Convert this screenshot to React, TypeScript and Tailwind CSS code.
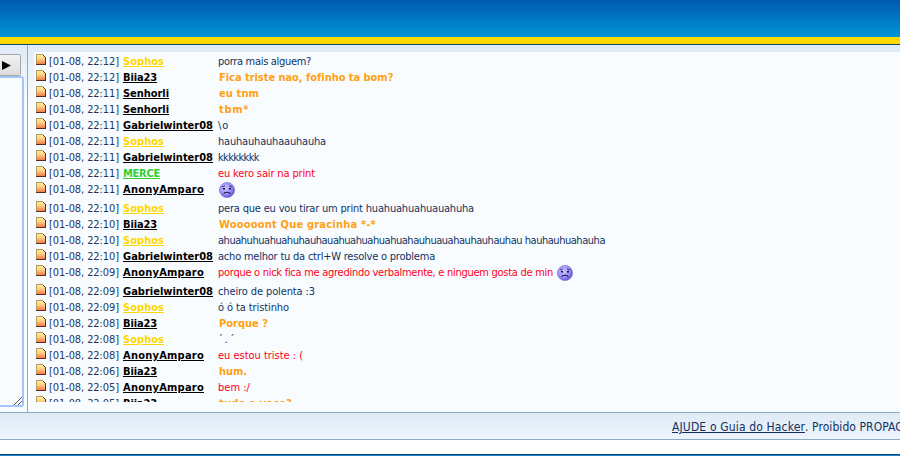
import { useLayoutEffect, useRef, useState } from 'react';

type Tone = 'navy' | 'orange' | 'red';
type Message = { time: string; user: string; text: string; width: number; tone: Tone; sad?: boolean };

const users: Record<string, { width: number; color: string }> = {
  Sophos: { width: 41, color: 'text-[#ffd700]' },
  Biia23: { width: 34, color: 'text-black' },
  Senhorli: { width: 46, color: 'text-black' },
  Gabrielwinter08: { width: 90, color: 'text-black' },
  MERCE: { width: 37, color: 'text-[#32cd32]' },
  AnonyAmparo: { width: 81, color: 'text-black' },
};

const tones: Record<Tone, string> = {
  navy: '-ml-px text-[#12325f]',
  orange: 'font-bold text-[#ffa012]',
  red: '-ml-px text-[#ff0019]',
};

const messages: Message[] = [
  { time: '22:12', user: 'Sophos', text: 'porra mais alguem?', width: 93, tone: 'navy' },
  { time: '22:12', user: 'Biia23', text: 'Fica triste nao, fofinho ta bom?', width: 174, tone: 'orange' },
  { time: '22:11', user: 'Senhorli', text: 'eu tnm', width: 40, tone: 'orange' },
  { time: '22:11', user: 'Senhorli', text: 'tbm*', width: 30, tone: 'orange' },
  { time: '22:11', user: 'Gabrielwinter08', text: '\\o', width: 11, tone: 'navy' },
  { time: '22:11', user: 'Sophos', text: 'hauhauhauhaauhauha', width: 108, tone: 'navy' },
  { time: '22:11', user: 'Gabrielwinter08', text: 'kkkkkkkk', width: 41, tone: 'navy' },
  { time: '22:11', user: 'MERCE', text: 'eu kero sair na print', width: 97, tone: 'red' },
  { time: '22:11', user: 'AnonyAmparo', text: '', width: 0, tone: 'red', sad: true },
  { time: '22:10', user: 'Sophos', text: 'pera que eu vou tirar um print huahuahuahuauahuha', width: 256, tone: 'navy' },
  { time: '22:10', user: 'Biia23', text: 'Wooooont Que gracinha *-*', width: 157, tone: 'orange' },
  { time: '22:10', user: 'Sophos', text: 'ahuahuhuahuahuhauhauahuahuahuahuahauhuauahauhauhauhau hauhauhuahauha', width: 387, tone: 'navy' },
  { time: '22:10', user: 'Gabrielwinter08', text: 'acho melhor tu da ctrl+W resolve o problema', width: 217, tone: 'navy' },
  { time: '22:09', user: 'AnonyAmparo', text: 'porque o nick fica me agredindo verbalmente, e ninguem gosta de min', width: 335, tone: 'red', sad: true },
  { time: '22:09', user: 'Gabrielwinter08', text: 'cheiro de polenta :3', width: 97, tone: 'navy' },
  { time: '22:09', user: 'Sophos', text: 'ó ó ta tristinho', width: 71, tone: 'navy' },
  { time: '22:08', user: 'Biia23', text: 'Porque ?', width: 49, tone: 'orange' },
  { time: '22:08', user: 'Sophos', text: '´.´', width: 18, tone: 'navy' },
  { time: '22:08', user: 'AnonyAmparo', text: 'eu estou triste : (', width: 85, tone: 'red' },
  { time: '22:06', user: 'Biia23', text: 'hum.', width: 28, tone: 'orange' },
  { time: '22:05', user: 'AnonyAmparo', text: 'bem :/', width: 32, tone: 'red' },
  { time: '22:05', user: 'Biia23', text: 'tudo e voce?', width: 73, tone: 'orange' },
];

/** Tracks a run of text so that it fills the given width. */
function Fit({ text, width, className = '' }: { text: string; width: number; className?: string }) {
  const ref = useRef<HTMLSpanElement>(null);
  const [spacing, setSpacing] = useState(0);
  useLayoutEffect(() => {
    if (ref.current && text.length) {
      ref.current.style.letterSpacing = '0px';
      const next = (width - ref.current.getBoundingClientRect().width) / text.length;
      ref.current.style.letterSpacing = `${next}px`;
      setSpacing(next);
    }
  }, [text, width]);
  return (
    <span ref={ref} className={`inline-block whitespace-pre ${className}`} style={{ letterSpacing: `${spacing}px` }}>
      {text}
    </span>
  );
}

function PostIcon() {
  return (
    <svg className="block h-[11px] w-[11px] shrink-0" viewBox="0 0 11 11" shapeRendering="crispEdges">
      <defs>
        <linearGradient id="note" x1="0" y1="0" x2="0" y2="1">
          <stop offset="0" stopColor="#fff6a4" />
          <stop offset="0.45" stopColor="#ffd083" />
          <stop offset="1" stopColor="#f4673f" />
        </linearGradient>
      </defs>
      <path d="M0 0H7V1H8V2H9V3H10V11H0Z" fill="url(#note)" />
      <path d="M0 0H7V1H1V10H0Z" fill="#b59a5c" />
      <path d="M7 1H8V2H9V3H10V11H0V10H9V3H8V2H7Z" fill="#59301f" />
    </svg>
  );
}

function SadFace() {
  return (
    <svg className="block h-4 w-4 shrink-0" viewBox="0 0 16 16">
      <defs>
        <radialGradient id="face" cx=".4" cy=".38" r=".65">
          <stop offset="0" stopColor="#c9c5ff" />
          <stop offset=".6" stopColor="#9a90fb" />
          <stop offset="1" stopColor="#6051cd" />
        </radialGradient>
      </defs>
      <circle cx="8" cy="8" r="7.6" fill="url(#face)" stroke="#7468c4" strokeWidth=".6" />
      <path d="M3 5L6 3.8M10 3.8L13 5" stroke="#30265c" strokeWidth=".9" />
      <path d="M4 6H6V7.5H4ZM10 6H12V7.5H10Z" fill="#17112d" />
      <path d="M5 12V11L6.5 10.4H9.5L11 11V12" fill="none" stroke="#17112d" strokeWidth="1" />
    </svg>
  );
}

function Row({ message }: { message: Message }) {
  const user = users[message.user];
  return (
    <li className={`flex shrink-0 items-start ${message.sad ? 'h-[19px]' : 'h-4'}`}>
      <PostIcon />
      <div className="ml-0.5 w-[74px] shrink-0 text-[#263761]">
        <Fit text={`[01-08, ${message.time}]`} width={70} />
      </div>
      <div className={`w-24 shrink-0 font-bold ${user.color}`}>
        <Fit text={message.user} width={user.width} className="underline decoration-1 underline-offset-1" />
      </div>
      <div className={`flex ${message.text ? tones[message.tone] : ''}`}>
        {message.text && <Fit text={message.text} width={message.width} />}
        {message.sad && <span className={message.text ? 'ml-1' : ''}><SadFace /></span>}
      </div>
    </li>
  );
}

export default function App() {
  return (
    <div className="flex h-[456px] w-[900px] flex-col overflow-hidden bg-white font-['DejaVu_Sans_Condensed','DejaVu_Sans',sans-serif] [font-stretch:condensed]">
      <header className="h-[37px] shrink-0 bg-linear-to-b from-[#005aae] to-[#0095d8]" />
      <div className="h-[7px] shrink-0 bg-[#ffd800]" />
      <div className="h-px shrink-0 bg-[#104a78]" />
      <main className="flex h-[367px] shrink-0 bg-[linear-gradient(to_bottom,#dfebf6_0px,#f8fcff_60px)]">
        <aside className="flex w-7 shrink-0 flex-col border-r border-[#8eabc4] pt-[9px]">
          <button className="flex h-[22px] w-[21px] items-center rounded-r-[2px] border border-l-0 border-[#a5a5a5] bg-linear-to-b from-[#f3f3f3] to-[#dddddd]">
            <svg className="ml-0.5 block h-[9px] w-[9px]" viewBox="0 0 9 9"><path d="M0 0L9 4.5L0 9Z" fill="#000" /></svg>
          </button>
          <div className="flex h-[331px] w-6 items-end justify-end rounded-r-[3px] border-2 border-l-0 border-[#a3c5fc] bg-[#f8fcff]">
            <svg className="block h-2 w-2" viewBox="0 0 8 8"><path d="M0 8L8 0M4 8L8 4" stroke="#555" fill="none" /></svg>
          </div>
        </aside>
        <ul className="ml-1.5 mt-[7px] flex h-[350px] flex-1 flex-col overflow-hidden bg-[#f8fcff] pl-0.5 pt-0.5 text-[11px] leading-4">
          {messages.map((message, index) => <Row key={index} message={message} />)}
        </ul>
      </main>
      <footer className="flex h-7 shrink-0 whitespace-nowrap border-y border-[#8eabc4] bg-linear-to-b from-[#dfebf6] to-[#eef4fd] pl-[672px] text-[12px] leading-[29px] text-[#12305e]">
        <Fit text="AJUDE o Guia do Hacker" width={133} className="underline decoration-1 underline-offset-1" />
        <Fit text=". Proibido PROPAGANDA" width={130} />
      </footer>
      <div className="mt-3.5 h-px shrink-0 bg-[#104a78]" />
      <div className="h-px shrink-0 bg-[#1687cb]" />
    </div>
  );
}
